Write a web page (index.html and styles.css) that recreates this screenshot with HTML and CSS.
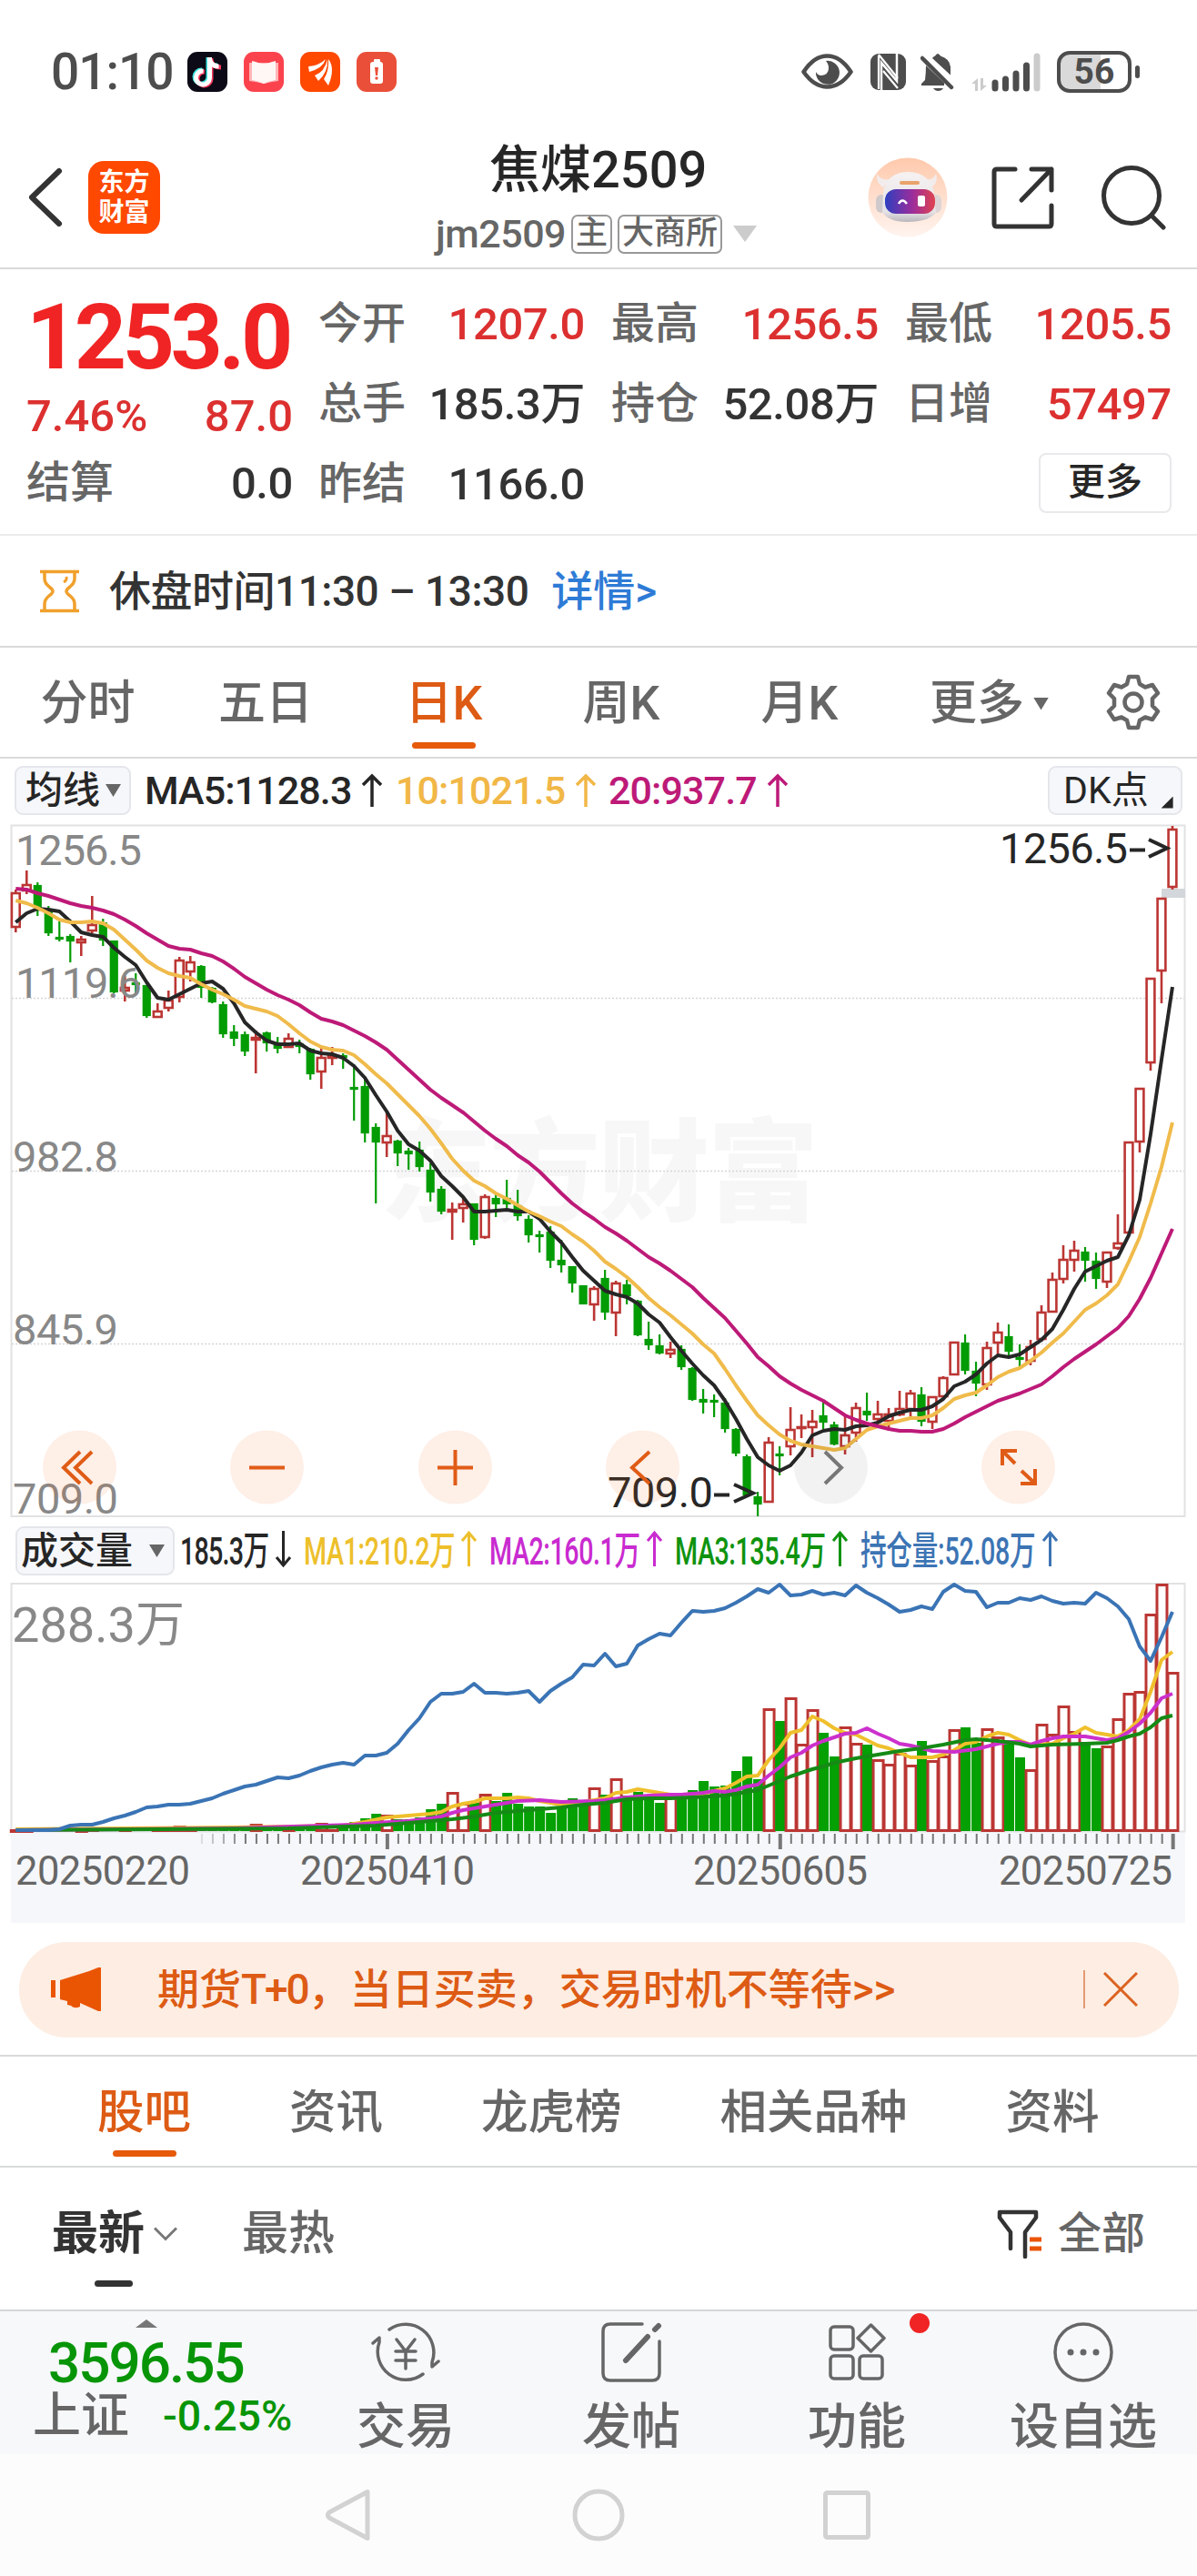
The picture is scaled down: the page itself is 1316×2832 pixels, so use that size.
FILE: index.html
```html
<!DOCTYPE html>
<html lang="zh-CN">
<head>
    <meta charset="UTF-8">
    <meta name="viewport" content="width=device-width, initial-scale=1.0">
    <title>焦煤2509</title>
    <link rel="stylesheet" href="styles.css">
</head>
<body>
    <!-- 状态栏 -->
    <div class="status-bar">
        <span class="clock">01:10</span>
        <div class="app-icons">
            <svg width="44" height="44" viewBox="0 0 44 44"><rect width="44" height="44" rx="11" fill="#0b0a16"/><g fill="none" stroke-width="5"><path d="M23 6v22a7.500 7.500 0 1 1-7-8M23 7c1 6 5 8 10 8" stroke="#3fe5e0"/><path d="M26 7v23a7.500 7.500 0 1 1-7-8M26 9c1 6 5 8 11 8" stroke="#f5385d"/><path d="M24.500 6v23a7.500 7.500 0 1 1-7-8M24.500 8c1 5 4 8 10 8" stroke="#fff"/></g></svg>
            <svg width="44" height="44" viewBox="0 0 44 44"><rect width="44" height="44" rx="11" fill="#fb434e"/><path d="M6 12h32v20l-7 1-9 2-9-2-7-1z" fill="#ffb5b8"/><path d="M9 10l4 1q9 4 18 0l4-1v21q-7 1-13 4-6-3-13-4z" fill="#fff6f6"/></svg>
            <svg width="44" height="44" viewBox="0 0 44 44"><rect width="44" height="44" rx="11" fill="#ff4800"/><g fill="#fff"><path d="M9 16q12-1 19-8-3 10-18 14z"/><path d="M16 26q11-4 14-18 1 14-10 24z"/><path d="M26 30q6-9 5-22 8 10 0 29z"/></g></svg>
            <svg width="44" height="44" viewBox="0 0 44 44"><rect width="44" height="44" rx="11" fill="#ea4f39"/><rect x="19" y="8" width="7" height="4" rx="1" fill="#fff"/><rect x="15" y="11" width="14" height="24" rx="3" fill="#fff"/><path d="M20 17h4l-1 9h-2z" fill="#ea4f39"/><circle cx="22" cy="29" r="1.700" fill="#ea4f39"/></svg>
        </div>
        <div class="status-icons">
            <svg width="57" height="40" viewBox="0 0 57 40"><path d="M2.500 20Q14 2.500 28.500 2.500T54.500 20Q43 36.500 28.500 36.500T2.500 20z" fill="none" stroke="#4d4d4d" stroke-width="4.500" stroke-linejoin="round"/><path d="M27 8a13 13 0 1 1-11 12q2 4 6 4 8-1 8-8 0-5-3-8z" fill="#4d4d4d"/></svg>
            <svg class="nfc" width="40" height="40" viewBox="0 0 40 40"><rect width="39" height="40" rx="9" fill="#4d4d4d"/><path d="M12 40V10l17 20V0" fill="none" stroke="#fff" stroke-width="2.500"/><path d="M9 2v37M9 1L30 27M14 19l16 19" fill="none" stroke="#fff" stroke-width="2.200"/></svg>
            <svg class="bell" width="38" height="43" viewBox="0 0 38 43"><path d="M13 6q1-2 3-2.500 3-5 6 0 10 3 11 12v9zM6 14L26 33v3H1v-2l4-4q1-8 1-16z" fill="#4d4d4d"/><path d="M2 6l32 32" stroke="#4d4d4d" stroke-width="4.500" stroke-linecap="round"/><path d="M14 39h11q-2 3-5.500 3T14 39z" fill="#4d4d4d"/></svg>
            <svg width="78" height="43" viewBox="0 0 78 43"><path d="M0 34l7-6v14H4v-8zM17 36l-7 6V28h3v8z" fill="#cbcbcb"/><g stroke-width="7" stroke-linecap="round" stroke="#4d4d4d"><path d="M26 33v6M37.500 29v10M49 23v16M60.500 14v25"/><path d="M72 4v35" stroke="#cbcbcb"/></g></svg>
            <div class="battery"><span>56</span></div>
        </div>
    </div>

    <!-- 标题栏 -->
    <header class="header">
        <svg class="back" width="42" height="68" viewBox="0 0 42 68"><path d="M37 5L7 34l30 29" fill="none" stroke="#333" stroke-width="6" stroke-linecap="round" stroke-linejoin="round"/></svg>
        <div class="logo">东方<br>财富</div>
        <div class="title">
            <h1>焦煤2509</h1>
            <div class="subtitle">
                <span>jm2509</span><span class="tag">主</span><span class="tag">大商所</span>
                <i class="tri tri-light"></i>
            </div>
        </div>
        <svg class="robot" width="88" height="88" viewBox="0 0 88 88">
            <defs>
                <linearGradient id="sky" x1="0" y1="0" x2="0" y2="1"><stop offset="0" stop-color="#ffc9ac"/><stop offset="1" stop-color="#fff4ef"/></linearGradient>
                <linearGradient id="visor"><stop offset="0" stop-color="#2e3fc0"/><stop offset=".55" stop-color="#9c2d9b"/><stop offset="1" stop-color="#e04450"/></linearGradient>
                <linearGradient id="shell" x1="0" y1="0" x2="0" y2="1"><stop offset="0" stop-color="#f6f2f2"/><stop offset=".8" stop-color="#e6e3e7"/><stop offset="1" stop-color="#b9b6bc"/></linearGradient>
            </defs>
            <circle cx="44" cy="44" r="43.500" fill="url(#sky)"/>
            <path d="M10 18q-1 10 7 15l8-9q-11 2-15-6zM75 18q3 10-5 15l-8-9q10 2 13-6z" fill="#f2ecec"/>
            <rect x="9" y="41" width="12" height="20" rx="6" fill="#cfc9cb"/><rect x="69" y="41" width="12" height="20" rx="6" fill="#ddd5d6"/>
            <path d="M17 39q3-22 27-23 25 1 29 23l2 22q-9 10-32 10-20 0-27-11z" fill="url(#shell)"/>
            <rect x="19" y="35" width="55" height="27" rx="12" fill="url(#visor)"/>
            <path d="M34 51q4-7 9 0" fill="none" stroke="#fff" stroke-width="2.500"/><rect x="55" y="42" width="8" height="12" rx="2" fill="#fff"/>
            <rect x="35" y="26" width="22" height="4" rx="2" fill="#e9a36b"/>
        </svg>
        <svg class="share" width="70" height="70" viewBox="0 0 70 70"><g fill="none" stroke="#333" stroke-width="5" stroke-linecap="round" stroke-linejoin="round"><path d="M26 4H6q-3 0-3 3v57q0 3 3 3h57q3 0 3-3V44"/><path d="M44 4h22v23M66 4L33 38"/></g></svg>
        <svg class="search" width="72" height="72" viewBox="0 0 72 72"><g fill="none" stroke="#333" stroke-width="5" stroke-linecap="round"><circle cx="34" cy="34" r="30.500"/><path d="M56 56l13 13"/></g></svg>
    </header>

    <!-- 行情数据 -->
    <section class="quote">
        <div class="price-col">
            <div class="price">1253.0</div>
            <div class="change"><span>7.46%</span><span>87.0</span></div>
            <div class="pair settle"><label>结算</label><b>0.0</b></div>
        </div>
        <div class="stats">
            <div class="pair"><label>今开</label><b class="red">1207.0</b></div>
            <div class="pair"><label>最高</label><b class="red">1256.5</b></div>
            <div class="pair"><label>最低</label><b class="red">1205.5</b></div>
            <div class="pair"><label>总手</label><b>185.3万</b></div>
            <div class="pair"><label>持仓</label><b>52.08万</b></div>
            <div class="pair"><label>日增</label><b class="red">57497</b></div>
            <div class="pair"><label>昨结</label><b>1166.0</b></div>
            <span></span>
            <button class="more-button">更多</button>
        </div>
    </section>

    <section class="notice">
        <svg width="43" height="48" viewBox="0 0 43 48"><g fill="none" stroke="#f0a02c" stroke-width="3.500"><path d="M0 2.500h43M0 45.500h43M5 3v7q0 5 5 9 4 3 4 5t-4 5q-5 4-5 9v7M38 3v7q0 5-5 9-4 3-4 5t4 5q5 4 5 9v7"/><path d="M29 8q1 4-3 6" stroke-width="3"/></g></svg>
        <span class="notice-text">休盘时间11:30 – 13:30</span>
        <a>详情&gt;</a>
    </section>

    <!-- 周期切换 -->
    <nav class="period">
        <span>分时</span>
        <span>五日</span>
        <span class="active">日K</span>
        <span>周K</span>
        <span>月K</span>
        <span class="period-more">更多<i class="tri"></i></span>
        <svg width="62" height="62" viewBox="0 0 62 62"><g fill="none" stroke="#666" stroke-width="4.500" stroke-linejoin="round"><path d="M26 3h10l2 8 6 3.500 8-2.500 6 9-6 6v8l6 6-6 9-8-2.500-6 3.500-2 8H26l-2-8-6-3.500-8 2.500-6-9 6-6v-8l-6-6 6-9 8 2.500 6-3.500z"/><circle cx="31" cy="31" r="9.500"/></g></svg>
    </nav>

    <!-- 均线图例 -->
    <div class="ma-row">
        <button class="chip chip-ma">均线<i class="tri"></i></button>
        <span class="ma ma5">MA5:1128.3<svg class="arrow" width="24" height="38" viewBox="0 0 24 38"><path d="M12 37V3M2 13L12 3l10 10"/></svg></span>
        <span class="ma ma10">10:1021.5<svg class="arrow" width="24" height="38" viewBox="0 0 24 38"><path d="M12 37V3M2 13L12 3l10 10"/></svg></span>
        <span class="ma ma20">20:937.7<svg class="arrow" width="24" height="38" viewBox="0 0 24 38"><path d="M12 37V3M2 13L12 3l10 10"/></svg></span>
        <button class="chip chip-dk">DK点<i class="corner"></i></button>
    </div>

    <!-- K线图 -->
    <div class="kline">
        <svg id="kline" width="1316" height="776" viewBox="0 899 1316 776">
            <rect x="12.500" y="907.500" width="1290" height="759.500" fill="none" stroke="#e2e2e4" stroke-width="2"/>
            <text class="watermark" x="418" y="1332" textLength="482">东方财富</text>
            <g class="grid-lines"><path d="M13 1097.500H1302M13 1287.500H1302M13 1477.500H1302"/></g>
            <rect x="1277" y="977" width="26" height="10" fill="#d3d6da"/>
            <g id="candles"></g>
            <g id="ma-lines"></g>
            <g class="scale">
                <text x="17" y="951" textLength="139">1256.5</text>
                <text x="17" y="1097" textLength="139">1119.6</text>
                <text x="14" y="1288" textLength="116">982.8</text>
                <text x="14" y="1478" textLength="116">845.9</text>
                <text x="14" y="1664" textLength="116">709.0</text>
            </g>
            <g class="extreme">
                <text x="1099" y="949" textLength="141">1256.5</text>
                <path d="M1242 934.500h17M1263 923l20 9.500-20 9.500"/>
                <text x="668" y="1657" textLength="116">709.0</text>
                <path d="M785 1643.500h17M807 1632l21 9.500-21 9.500"/>
            </g>
            <g class="tools">
                <circle cx="87.500" cy="1613" r="40.500"/>
                <circle cx="293.500" cy="1613" r="40.500"/>
                <circle cx="500.500" cy="1613" r="40.500"/>
                <circle cx="706.500" cy="1613" r="40.500"/>
                <circle cx="913.500" cy="1613" r="40.500" class="disabled"/>
                <circle cx="1119.500" cy="1613" r="40.500"/>
                <path d="M88 1596l-18 17.500 18 17.500M101 1596l-18 17.500 18 17.500"/>
                <path d="M274 1613.500h39M481 1613.500h39M500.500 1594v39"/>
                <path d="M714 1596l-19 17.500 19 17.500"/>
                <path d="M907 1596l18 17.500-18 17.500" class="gray"/>
                <path d="M1102 1611v-16h16M1103 1596l13 13M1138 1615v16h-16M1137 1630l-14-13"/>
            </g>
        </svg>
    </div>

    <!-- 成交量图例 -->
    <div class="vol-row">
        <button class="chip chip-vol">成交量<i class="tri"></i></button>
        <svg width="980" height="60" viewBox="192 1675 980 60" class="vol-legend">
            <g fill="#262626" stroke="#262626"><text transform="translate(198 1720) scale(.667 1)" textLength="147">185.3万</text><path d="M311.500 1683v37M304 1712l7.500 9 7.500-9"/></g>
            <g fill="#edbf2b" stroke="#edbf2b"><text transform="translate(334 1720) scale(.667 1)" textLength="250">MA1:210.2万</text><path d="M515.500 1722v-37M508 1694l7.500-9 7.500 9"/></g>
            <g fill="#c92bd0" stroke="#c92bd0"><text transform="translate(538 1720) scale(.667 1)" textLength="249">MA2:160.1万</text><path d="M719.500 1722v-37M712 1694l7.500-9 7.500 9"/></g>
            <g fill="#0f930f" stroke="#0f930f"><text transform="translate(742 1720) scale(.667 1)" textLength="249">MA3:135.4万</text><path d="M923.500 1722v-37M916 1694l7.500-9 7.500 9"/></g>
            <g fill="#3c74b4" stroke="#3c74b4"><text transform="translate(946 1720) scale(.667 1)" textLength="289">持仓量:52.08万</text><path d="M1154.500 1722v-37M1147 1694l7.500-9 7.500 9"/></g>
        </svg>
    </div>

    <!-- 成交量图 -->
    <div class="volume">
        <svg id="volume" width="1316" height="384" viewBox="0 1735 1316 384">
            <rect x="12" y="2014" width="1291" height="100" fill="#f6f7fa"/>
            <rect x="12.500" y="1741" width="1290" height="272.500" fill="none" stroke="#e2e2e4" stroke-width="2"/>
            <g id="bars"></g>
            <g id="vol-lines"></g>
            <g id="ticks"></g>
            <text class="vol-max" x="13" y="1805" textLength="190">288.3万</text>
            <g class="dates">
                <text x="17" y="2072" textLength="192">20250220</text>
                <text x="330" y="2072" textLength="192">20250410</text>
                <text x="762" y="2072" textLength="192">20250605</text>
                <text x="1098" y="2072" textLength="191">20250725</text>
            </g>
        </svg>
    </div>

    <div class="banner">
        <svg width="55" height="48" viewBox="0 0 55 48"><path d="M0 14h5v19H0zM10 14L42 4l10-4h3v48h-3l-20-9v4q-6 3-10-1l-4-1v-4l-8-2z" fill="#ea5504"/></svg>
        <span class="banner-text">期货<em>T+0</em>，当日买卖，交易时机不等待&gt;&gt;</span>
        <i class="divider"></i>
        <svg width="38" height="38" viewBox="0 0 38 38"><path d="M1 1l36 36M37 1L1 37" stroke="#dc6220" stroke-width="3"/></svg>
    </div>

    <nav class="tabs">
        <span class="active">股吧</span>
        <span>资讯</span>
        <span>龙虎榜</span>
        <span>相关品种</span>
        <span>资料</span>
    </nav>

    <div class="sort-row">
        <span class="sort-active">最新</span>
        <svg width="26" height="16" viewBox="0 0 26 16"><path d="M1 1.500l12 12 12-12" fill="none" stroke="#777" stroke-width="3"/></svg>
        <span class="sort">最热</span>
        <svg class="funnel" width="50" height="54" viewBox="0 0 50 54"><path d="M15 43V25L3 9V3h40v6L31 25v27" fill="none" stroke="#333" stroke-width="4.500" stroke-linecap="round" stroke-linejoin="round"/><path d="M36 33h13M36 43h13" stroke="#ea5504" stroke-width="5"/></svg>
        <span class="all">全部</span>
    </div>

    <!-- 底部工具栏 -->
    <footer class="toolbar">
        <div class="index">
            <i class="tri-up"></i>
            <div class="index-value">3596.55</div>
            <div class="index-row"><span>上证</span><b>-0.25%</b></div>
        </div>
        <div class="tool">
            <svg width="76" height="68" viewBox="0 0 76 68"><g fill="none" stroke="#666" stroke-width="3.500" stroke-linecap="round" stroke-linejoin="round"><path d="M20 9A31 31 0 0 1 67 45v5l7-6M57 58A31 31 0 0 1 9 23v-5l-7 6"/><path d="M28 20l10 13 10-13M38 33v19M27 33h22M27 43h22"/></g></svg>
            <span>交易</span>
        </div>
        <div class="tool">
            <svg width="68" height="68" viewBox="0 0 68 68"><g fill="none" stroke="#666" stroke-width="3.500" stroke-linecap="round"><path d="M46 3H11q-8 0-8 8v46q0 8 8 8h46q8 0 8-8V22"/><path d="M28 43L52 17M60 9l4-4" stroke-width="6"/></g></svg>
            <span>发帖</span>
        </div>
        <div class="tool">
            <svg width="64" height="68" viewBox="0 0 64 68"><g fill="none" stroke="#666" stroke-width="3.500" stroke-linejoin="round"><rect x="3" y="6" width="25" height="25" rx="4"/><rect x="3" y="38" width="25" height="25" rx="4"/><rect x="35" y="38" width="25" height="25" rx="4"/><path d="M47.500 4L62 18.500 47.500 33 33 18.500z"/></g></svg>
            <i class="dot"></i>
            <span>功能</span>
        </div>
        <div class="tool">
            <svg width="68" height="68" viewBox="0 0 68 68"><circle cx="34" cy="34" r="31" fill="none" stroke="#666" stroke-width="3.500"/><g fill="#666"><circle cx="20" cy="34" r="3.500"/><circle cx="34" cy="34" r="3.500"/><circle cx="48" cy="34" r="3.500"/></g></svg>
            <span>设自选</span>
        </div>
    </footer>

    <!-- 系统导航 -->
    <div class="system-nav">
        <svg width="600" height="60" viewBox="0 0 600 60"><g fill="none" stroke="#d2d2d2" stroke-width="5" stroke-linejoin="round"><path d="M46 4.500v51L4 33q-3-3 0-6z"/><circle cx="300" cy="30" r="26"/><rect x="549.500" y="5.500" width="47" height="49" rx="2"/></g></svg>
    </div>

    <script src="chart.js"></script>
</body>
</html>
```

FILE: styles.css
```css
* {
    box-sizing: border-box;
}

body {
    margin: 0;
    width: 1316px;
    background-color: #fff;
    font-family: Roboto, "Noto Sans CJK SC", sans-serif;
    font-weight: 500;
    line-height: 1;
    color: #333;
}

svg {
    display: block;
    flex: none;
}

button {
    font-family: inherit;
    font-weight: 500;
    line-height: 1;
    color: #262626;
    padding: 0;
    display: flex;
    align-items: center;
}

span, label, b, a {
    white-space: nowrap;
}

.tri {
    flex: none;
    width: 17px;
    height: 14px;
    background-color: #666;
    clip-path: polygon(0 0, 100% 0, 50% 100%);
}

/* 状态栏 */
.status-bar {
    height: 158px;
    display: flex;
    align-items: center;
    padding: 0 72px 0 56px;
}

.clock {
    width: 150px;
    font-size: 55px;
    color: #4d4d4d;
    letter-spacing: -1px;
}

.app-icons {
    display: flex;
    gap: 18px;
}

.status-icons {
    display: flex;
    align-items: center;
    gap: 18px;
    margin-left: auto;
}

.nfc {
    margin-left: 1px;
}

.bell {
    margin-left: -3px;
}

.battery {
    position: relative;
    width: 82px;
    height: 46px;
    margin-left: -2px;
    border: 4px solid #4d4d4d;
    border-radius: 14px;
    background: linear-gradient(90deg, #d9d9d9 60%, #fff 60%);
    text-align: center;
    font-size: 39px;
    font-weight: 700;
    color: #4d4d4d;
}

.battery::after {
    content: "";
    position: absolute;
    right: -13px;
    top: 12px;
    width: 5px;
    height: 14px;
    border-radius: 3px;
    background-color: #4d4d4d;
}

/* 标题栏 */
.header {
    height: 138px;
    display: flex;
    align-items: center;
    border-bottom: 2px solid #d9dadb;
    padding: 0 34px 18px 28px;
}

.logo {
    width: 79px;
    height: 80px;
    margin-left: 27px;
    padding-top: 7px;
    border-radius: 17px;
    background-color: #ff4800;
    color: #fff;
    font-size: 28px;
    font-weight: 700;
    line-height: 33px;
    text-align: center;
}

.title {
    width: 360px;
    margin: 4px 0 0 303px;
}

.title h1 {
    margin: 0;
    padding-left: 59px;
    font-size: 56px;
    font-weight: 500;
    color: #262626;
}

.subtitle {
    display: flex;
    align-items: center;
    height: 44px;
    margin-top: 20px;
    font-size: 43px;
    letter-spacing: -0.500px;
    color: #666;
}

.tag {
    height: 43px;
    margin-left: 6px;
    padding: 0 3px;
    border: 2px solid #999;
    border-radius: 7px;
    font-size: 35px;
    letter-spacing: 0;
    line-height: 38px;
}

.tri-light {
    width: 26px;
    height: 18px;
    margin-left: 12px;
    background-color: #ccc;
}

.robot {
    margin-left: 115px;
}

.share {
    margin-left: 48px;
}

.search {
    margin-left: auto;
}

/* 行情数据 */
.quote {
    height: 293px;
    display: flex;
    border-bottom: 2px solid #ebebeb;
    padding: 16px 28px 0 29px;
}

.price-col {
    width: 293px;
}

.price {
    height: 115px;
    line-height: 117px;
    font-size: 100px;
    font-weight: 700;
    letter-spacing: -4.500px;
    color: #f02424;
}

.change {
    display: flex;
    justify-content: space-between;
    height: 60px;
    line-height: 62px;
    font-size: 49px;
    color: #dc3030;
}

.stats {
    flex: 1;
    margin-left: 28px;
    display: grid;
    grid-template-columns: 293px 294px 293px;
    grid-template-rows: 88px 88px 88px;
    column-gap: 29px;
}

.pair {
    display: flex;
    justify-content: space-between;
    align-items: center;
    height: 88px;
    font-size: 49px;
}

.pair label {
    font-size: 48px;
    color: #666;
}

.pair b {
    font-weight: 500;
    letter-spacing: -0.400px;
}

.pair .red {
    color: #dc3030;
}

.more-button {
    justify-self: end;
    align-self: center;
    justify-content: center;
    width: 146px;
    height: 66px;
    margin-bottom: 3px;
    border: 2px solid #e8e9eb;
    border-radius: 8px;
    background-color: #fff;
    font-size: 41px;
}

.notice {
    height: 123px;
    display: flex;
    align-items: center;
    border-bottom: 2px solid #d9dadb;
    padding-left: 44px;
    font-size: 46px;
}

.notice-text {
    margin-left: 33px;
    letter-spacing: -0.500px;
}

.notice a {
    margin-left: 25px;
    color: #2e7bd6;
}

/* 周期切换 */
.period {
    height: 122px;
    display: grid;
    grid-template-columns: 193px 198px 194px 196px 196px 238px 62px;
    align-items: center;
    border-bottom: 2px solid #d9dadb;
    font-size: 52px;
    color: #666;
}

.period span {
    position: relative;
    justify-self: center;
    padding-top: 3px;
}

.period .period-more {
    display: flex;
    align-items: center;
    justify-self: start;
    gap: 10px;
    margin-left: 45px;
}

.period .active,
.tabs .active {
    color: #dd5b14;
}

.period .active::after,
.tabs .active::after {
    content: "";
    position: absolute;
    left: calc(50% - 35px);
    bottom: -23px;
    width: 70px;
    height: 7px;
    border-radius: 4px;
    background-color: #e65a0a;
}

/* 均线图例 */
.ma-row {
    height: 65px;
    display: flex;
    align-items: center;
    padding: 5px 16px 0 16px;
    font-size: 43px;
    letter-spacing: -0.900px;
}

.chip {
    height: 54px;
    border: 2px solid #e4e6eb;
    border-radius: 9px;
    background-color: #f6f7fa;
    font-size: 41px;
}

.chip-ma {
    width: 128px;
    padding-left: 10px;
    gap: 6px;
}

.ma {
    display: flex;
    align-items: center;
    justify-content: space-between;
}

.arrow {
    fill: none;
    stroke: currentColor;
    stroke-width: 3.500px;
}

.ma5 {
    width: 262px;
    margin-left: 15px;
    color: #262626;
}

.ma10 {
    width: 221px;
    margin-left: 14px;
    color: #f1b747;
}

.ma20 {
    width: 198px;
    margin-left: 13px;
    color: #bd1a78;
}

.chip-dk {
    width: 148px;
    margin-left: auto;
    padding-left: 15px;
    font-weight: 400;
}

.corner {
    width: 13px;
    height: 13px;
    margin: 26px 0 0 14px;
    background-color: #262626;
    clip-path: polygon(100% 0, 100% 100%, 0 100%);
}

/* K线图 */
.watermark {
    font-size: 122px;
    font-weight: 900;
    fill: #f7f7f8;
}

.grid-lines {
    stroke: #d5d5d8;
    stroke-width: 1.500px;
    stroke-dasharray: 2 2;
}

.scale,
.vol-max {
    font-size: 47px;
    fill: #888;
}

.extreme {
    font-size: 47px;
    fill: #262626;
}

.extreme path {
    fill: none;
    stroke: #262626;
    stroke-width: 4px;
}

.tools circle {
    fill: #f26010;
    fill-opacity: 0.1;
}

.tools .disabled {
    fill: #000;
    fill-opacity: 0.05;
}

.tools path {
    fill: none;
    stroke: #e05c16;
    stroke-width: 4px;
}

.tools .gray {
    stroke: #777;
}

.candle-up {
    fill: #fff;
    stroke: #bb3633;
    stroke-width: 2.600px;
}

.candle-down {
    fill: #049c04;
    stroke: #049c04;
    stroke-width: 2.200px;
}

.bar-up {
    fill: #fff;
    stroke: #bb3633;
    stroke-width: 3px;
}

.bar-down {
    fill: #04a004;
}

.line {
    fill: none;
    stroke-width: 4px;
    stroke-linejoin: round;
}

/* 成交量 */
.vol-row {
    height: 60px;
    display: flex;
    align-items: center;
    padding-left: 17px;
}

.chip-vol {
    width: 175px;
    padding-left: 4px;
    gap: 18px;
}

.vol-legend {
    font-size: 43px;
}

.vol-legend text {
    stroke: none;
}

.vol-legend path {
    fill: none;
    stroke-width: 3px;
}

.vol-max {
    font-size: 54px;
}

.dates {
    font-size: 43.500px;
    fill: #666;
}

.scale,
.extreme,
.dates,
.vol-max {
    font-weight: 400;
}

/* 广告条 */
.banner {
    display: flex;
    align-items: center;
    width: 1275px;
    height: 105px;
    margin: 16px auto 19px 21px;
    padding: 0 45px 2px 35px;
    border-radius: 52px;
    background-color: #fdede3;
    font-size: 46px;
    color: #dd5b14;
}

.banner-text {
    margin-left: 62px;
}

.banner-text em {
    font-style: normal;
    letter-spacing: -2px;
}

.divider {
    width: 2px;
    height: 42px;
    margin: 0 20px 0 auto;
    background-color: #e29a72;
}

.tabs {
    height: 124px;
    display: flex;
    align-items: center;
    gap: 108px;
    padding-left: 107px;
    border-top: 2px solid #d9dadb;
    border-bottom: 2px solid #d9dadb;
    font-size: 51.500px;
    color: #666;
}

.tabs span {
    position: relative;
    padding-top: 3px;
}

.sort-row {
    height: 156px;
    display: flex;
    align-items: center;
    padding: 0 57px 11px 57px;
    font-size: 51px;
}

.sort-active {
    position: relative;
    margin-right: 10px;
    font-weight: 700;
}

.sort-active::after {
    content: "";
    position: absolute;
    left: 47px;
    bottom: -33px;
    width: 42px;
    height: 7px;
    border-radius: 4px;
    background-color: #333;
}

.sort {
    margin-left: 71px;
    color: #666;
}

.funnel {
    margin: 0 17px 0 auto;
}

.all {
    font-size: 48px;
    color: #666;
}

/* 底部工具栏 */
.toolbar {
    height: 159px;
    display: grid;
    grid-template-columns: 322px 248px 248px 248px 250px;
    border-top: 2px solid #d4d6d9;
    background-color: #f6f8fa;
    color: #666;
}

.index {
    padding-top: 9px;
}

.tri-up {
    display: block;
    width: 24px;
    height: 9px;
    margin-left: 149px;
    background-color: #777;
    clip-path: polygon(50% 0, 100% 100%, 0 100%);
}

.index-value {
    margin: 8px 0 0 53px;
    font-size: 62px;
    letter-spacing: -2px;
    color: #079507;
}

.index-row {
    display: flex;
    align-items: center;
    margin: 1px 0 0 36px;
    font-size: 53px;
}

.index-row b {
    margin-left: 37px;
    font-size: 46.500px;
    font-weight: 500;
    color: #079507;
}

.tool {
    position: relative;
    display: flex;
    flex-direction: column;
    align-items: center;
    gap: 22px;
    padding-top: 11px;
    font-size: 54px;
}

.dot {
    position: absolute;
    left: 182px;
    top: 2px;
    width: 22px;
    height: 22px;
    border-radius: 50%;
    background-color: #f02424;
}

.system-nav {
    height: 134px;
    display: flex;
    align-items: center;
    justify-content: center;
    background-color: #fcfcfc;
}
```

FILE: chart.js
```js
var STEP = 11.997;
var LEFT = 17.3;

// [1 = 涨 / 0 = 跌, 最高, 实体上沿, 实体下沿, 最低]
var candles = [
    [1,978,981,1020,1025],[1,957,972,980,983],[0,970,973,998,1007],[0,996,999,1026,1029],[0,1013,1030,1032,1035],
    [0,1027,1029,1035,1058],[1,1029,1032,1037,1051],[1,985,1016,1024,1026],[0,1010,1014,1034,1040],[0,1034,1034,1091,1092],
    [1,1073,1085,1090,1101],[0,1070,1080,1083,1092],[0,1083,1083,1117,1119],[1,1103,1111,1119,1119],[1,1089,1099,1109,1112],
    [1,1052,1055,1097,1102],[1,1051,1057,1069,1079],[0,1061,1062,1086,1097],[0,1085,1086,1102,1103],[0,1101,1104,1137,1141],
    [0,1127,1134,1142,1150],[0,1134,1137,1156,1161],[1,1133,1140,1144,1180],[0,1134,1135,1147,1156],[0,1140,1147,1153,1158],
    [1,1136,1141,1152,1152],[0,1143,1147,1151,1158],[0,1152,1153,1181,1187],[1,1151,1162,1179,1197],[1,1151,1160,1164,1171],
    [0,1158,1160,1162,1175],[0,1170,1195,1197,1232],[0,1183,1194,1246,1256],[0,1235,1239,1256,1323],[1,1223,1248,1257,1272],
    [0,1253,1254,1268,1282],[0,1262,1265,1269,1286],[0,1255,1264,1283,1288],[0,1279,1286,1311,1321],[0,1304,1307,1332,1335],
    [1,1322,1329,1333,1363],[1,1318,1323,1329,1344],[0,1323,1323,1363,1369],[1,1313,1315,1361,1362],[0,1313,1317,1324,1338],
    [0,1297,1317,1324,1332],[0,1308,1325,1337,1342],[0,1336,1340,1358,1366],[0,1353,1357,1360,1377],[0,1348,1354,1386,1394],
    [0,1363,1385,1391,1399],[0,1392,1392,1411,1421],[0,1413,1413,1434,1434],[1,1414,1416,1435,1452],[0,1396,1405,1443,1451],
    [1,1408,1410,1444,1469],[0,1407,1412,1425,1434],[0,1429,1430,1468,1469],[0,1453,1472,1479,1484],[0,1467,1479,1488,1489],
    [1,1475,1483,1489,1493],[0,1479,1483,1503,1506],[0,1503,1504,1539,1540],[0,1527,1538,1542,1554],[0,1533,1539,1541,1558],
    [0,1537,1542,1571,1575],[0,1570,1571,1598,1601],[0,1599,1601,1644,1645],[0,1640,1645,1654,1667],[1,1580,1585,1652,1652],
    [0,1590,1598,1600,1622],[1,1547,1571,1591,1600],[1,1555,1568,1571,1581],[1,1550,1562,1570,1602],[0,1541,1556,1564,1571],
    [0,1563,1566,1588,1589],[1,1556,1577,1591,1599],[1,1542,1547,1576,1585],[0,1531,1551,1556,1562],[1,1540,1554,1561,1563],
    [1,1548,1554,1563,1570],[1,1529,1548,1556,1557],[1,1528,1531,1550,1557],[0,1525,1533,1563,1568],[1,1535,1535,1564,1571],
    [1,1513,1514,1536,1537],[1,1475,1475,1512,1512],[0,1467,1476,1507,1511],[0,1497,1507,1521,1535],[1,1475,1481,1523,1528],
    [1,1454,1464,1477,1490],[0,1456,1469,1486,1491],[0,1478,1492,1493,1502],[1,1473,1480,1497,1501],[1,1435,1442,1473,1475],
    [1,1399,1406,1443,1443],[1,1369,1384,1407,1411],[1,1364,1374,1386,1398],[0,1371,1376,1386,1409],[0,1377,1386,1406,1417],
    [1,1376,1376,1410,1416],[1,1335,1366,1373,1374],[1,1255,1255,1356,1357],[1,1196,1196,1256,1267],[1,1075,1075,1169,1177],
    [1,987,987,1068,1103],[1,908,911,976,978]
];

var ma5 = [1014,1004,999,1000,1002,1013,1025,1028,1030,1042,1052,1061,1080,1097,1099,1093,1087,1081,1079,1087,1103,1124,1135,1144,1148,1148,1147,1155,1158,1159,1163,1172,1185,1204,1222,1243,1258,1265,1276,1293,1304,1316,1332,1332,1331,1330,1332,1332,1340,1354,1366,1382,1397,1408,1419,1423,1426,1433,1445,1454,1470,1485,1499,1512,1523,1540,1560,1582,1602,1611,1617,1611,1597,1578,1573,1571,1572,1568,1567,1564,1557,1553,1550,1550,1546,1538,1524,1519,1511,1499,1490,1492,1489,1481,1473,1461,1440,1417,1398,1392,1386,1382,1358,1319,1247,1165,1085];
var ma10 = [990,993,998,1004,1011,1014,1014,1013,1015,1022,1033,1044,1056,1064,1070,1073,1075,1082,1088,1093,1099,1106,1109,1112,1117,1126,1136,1145,1151,1154,1155,1160,1170,1181,1191,1203,1215,1227,1241,1257,1274,1287,1298,1304,1312,1318,1325,1332,1337,1343,1348,1357,1365,1375,1387,1395,1404,1415,1427,1437,1446,1456,1466,1478,1488,1505,1523,1540,1556,1567,1577,1584,1588,1590,1592,1594,1592,1582,1572,1568,1565,1562,1559,1559,1556,1548,1538,1534,1531,1523,1514,1508,1504,1496,1487,1476,1466,1453,1440,1433,1424,1412,1387,1360,1323,1283,1234];
var ma20 = [977,978,982,985,989,993,996,998,1001,1005,1011,1018,1026,1033,1040,1043,1044,1048,1051,1057,1065,1074,1081,1088,1094,1099,1105,1113,1120,1123,1127,1133,1139,1146,1154,1165,1176,1187,1198,1207,1215,1223,1233,1243,1252,1260,1270,1278,1288,1300,1312,1323,1332,1340,1349,1356,1364,1373,1382,1389,1397,1406,1415,1427,1438,1449,1463,1477,1492,1502,1513,1521,1528,1534,1540,1548,1556,1561,1565,1568,1571,1573,1573,1574,1574,1571,1565,1558,1552,1546,1540,1536,1532,1527,1522,1513,1503,1494,1486,1478,1469,1460,1447,1428,1405,1378,1351];

// 成交量柱顶
var volumes = [2011,2011,2011,2011,2011,2011,2011,2010,2010,2010,2010,2010,2010,2010,2010,2007,2009,2009,2009,2009,2009,2009,2005,2008,2008,2007,2008,2008,2004,2007,2007,2003,1999,1994,1995,2000,2000,1998,1989,1983,1970,1982,1982,1972,1980,1971,1983,1986,1986,1993,1986,1977,1982,1965,1973,1955,1974,1970,1976,1982,1975,1975,1968,1958,1964,1963,1947,1931,1956,1878,1892,1866,1917,1879,1905,1931,1898,1916,1918,1934,1939,1927,1940,1914,1935,1930,1901,1899,1916,1900,1909,1913,1932,1945,1895,1906,1875,1903,1915,1922,1919,1889,1861,1859,1774,1741,1838];
// 持仓量
var holding = [2012,2012,2012,2012,2011,2007,2006,2006,2003,1999,1996,1992,1987,1986,1984,1984,1983,1980,1977,1972,1968,1964,1962,1958,1954,1955,1952,1947,1943,1940,1938,1940,1930,1930,1927,1917,1902,1889,1871,1862,1862,1860,1851,1861,1861,1862,1861,1859,1871,1859,1851,1844,1830,1831,1818,1832,1829,1809,1802,1796,1798,1784,1771,1772,1771,1768,1762,1755,1747,1751,1742,1754,1753,1749,1753,1751,1754,1743,1751,1757,1764,1772,1770,1766,1769,1750,1742,1749,1750,1767,1762,1762,1757,1759,1755,1760,1763,1762,1763,1751,1757,1766,1780,1810,1826,1800,1772];

// 成交量均线: [序号, y]
var volMa1 = [[0,2011],[10,2010],[20,2009],[30,2007],[32,2003],[34,1998],[36,1996],[38,1994],[39,1992],[40,1986],[41,1983],[42,1981],[43,1977],[45,1977],[46,1976],[47,1977],[48,1980],[50,1984],[51,1983],[53,1979],[54,1977],[55,1971],[56,1970],[57,1967],[58,1969],[59,1971],[60,1973],[61,1973],[63,1972],[64,1969],[65,1966],[66,1960],[67,1953],[68,1952],[69,1935],[70,1922],[71,1905],[72,1902],[73,1887],[74,1892],[75,1900],[76,1905],[77,1907],[78,1913],[79,1919],[80,1922],[81,1927],[82,1932],[84,1932],[85,1929],[86,1924],[87,1917],[88,1915],[89,1909],[90,1905],[91,1907],[92,1913],[93,1918],[95,1917],[96,1911],[97,1906],[98,1899],[99,1905],[100,1907],[101,1909],[102,1902],[103,1890],[104,1860],[105,1825],[106,1816]];
var volMa2 = [[0,2012],[20,2010],[31,2006],[33,2004],[36,2002],[38,1999],[39,1997],[40,1993],[41,1990],[42,1988],[43,1986],[44,1984],[45,1982],[46,1980],[48,1979],[50,1981],[53,1980],[54,1979],[56,1976],[58,1974],[60,1973],[61,1973],[63,1971],[64,1969],[65,1970],[66,1968],[67,1964],[68,1962],[69,1952],[70,1943],[71,1932],[72,1927],[73,1919],[74,1914],[76,1906],[77,1905],[78,1900],[79,1906],[80,1911],[81,1917],[82,1919],[83,1922],[84,1925],[86,1926],[88,1923],[89,1920],[90,1917],[91,1915],[92,1915],[93,1918],[94,1914],[95,1911],[96,1909],[98,1909],[99,1911],[100,1913],[101,1911],[102,1904],[103,1895],[104,1883],[105,1867],[106,1862]];
var volMa3 = [[0,2012],[25,2010],[33,2007],[36,2004],[38,2002],[40,2000],[42,1997],[44,1993],[46,1991],[48,1989],[50,1987],[52,1984],[54,1982],[56,1978],[58,1977],[60,1977],[62,1976],[65,1974],[66,1972],[68,1968],[69,1963],[70,1958],[71,1953],[72,1949],[73,1945],[74,1942],[75,1938],[77,1933],[79,1929],[81,1925],[83,1922],[85,1918],[87,1913],[88,1912],[90,1914],[92,1917],[93,1920],[95,1918],[98,1917],[100,1916],[101,1913],[102,1909],[103,1906],[104,1899],[105,1889],[106,1886]];

function xOf(i) {
    return LEFT + i * STEP;
}

function add(parent, name, attrs) {
    var el = document.createElementNS("http://www.w3.org/2000/svg", name);
    for (var key in attrs) {
        el.setAttribute(key, attrs[key]);
    }
    document.getElementById(parent).appendChild(el);
}

function drawLine(parent, data, color) {
    var points = data.map(function (d, i) {
        return Array.isArray(d) ? xOf(d[0]) + "," + d[1] : xOf(i) + "," + d;
    });
    add(parent, "polyline", { points: points.join(" "), "class": "line", stroke: color });
}

candles.forEach(function (c, i) {
    var x = xOf(i);
    var cls = c[0] ? "candle-up" : "candle-down";
    var half = c[0] ? 4.4 : 3.5;
    add("candles", "path", { d: "M" + x + " " + c[1] + "V" + c[4], "class": cls });
    add("candles", "rect", { x: x - half, y: c[2] + 1, width: half * 2, height: Math.max(c[3] - c[2] - 2, 1), "class": cls });
});
drawLine("ma-lines", ma5, "#262626");
drawLine("ma-lines", ma10, "#f0bb4b");
drawLine("ma-lines", ma20, "#bd1a78");

volumes.forEach(function (top, i) {
    var x = xOf(i);
    if (candles[i][0]) {
        add("bars", "rect", { x: x - 5, y: top + 1.5, width: 11, height: Math.max(2012.5 - top - 1.5, 1), "class": "bar-up" });
    } else {
        add("bars", "rect", { x: x - 5, y: top, width: 11, height: 2013 - top, "class": "bar-down" });
    }
});
drawLine("vol-lines", volMa1, "#efc02c");
drawLine("vol-lines", volMa2, "#cc30cc");
drawLine("vol-lines", volMa3, "#158a15");
drawLine("vol-lines", holding, "#3a74b5");

// 时间刻度，左侧逐渐淡出
for (var i = 17; i <= 106; i++) {
    var major = i === 34 || i === 70 || i === 106;
    add("ticks", "path", {
        d: "M" + (xOf(i) + 0.7) + " 2016V" + (major ? 2033 : 2027),
        stroke: "#777",
        "stroke-width": major ? 4 : 2,
        opacity: Math.min(1, (i - 16) / 5)
    });
}
```
